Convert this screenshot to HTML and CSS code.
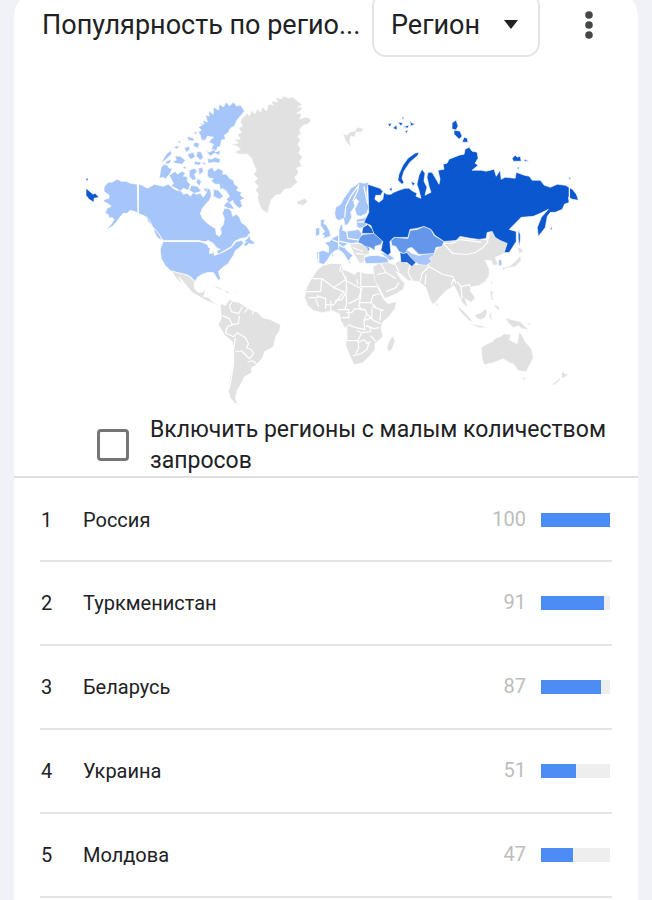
FILE: index.html
```html
<!doctype html>
<html lang="ru">
  <head>
    <meta charset="utf-8">
    <meta name="viewport" content="width=device-width, initial-scale=1">
    <title>Популярность по регионам</title>
    <link rel="stylesheet" href="styles.css">
  </head>
  <body>
    <main class="card">
      <header class="card-header">
        <h1>Популярность по регио...</h1>
        <div class="select">
          <select aria-label="Тип региона">
            <option>Регион</option>
          </select>
          <svg class="arrow" viewBox="0 0 14 9"><path d="M0 0h14L7 9z"/></svg>
        </div>
        <button class="menu" type="button" aria-label="Меню">
          <svg viewBox="0 0 8 28"><circle cx="4" cy="4" r="3.8"/><circle cx="4" cy="14" r="3.8"/><circle cx="4" cy="24" r="3.8"/></svg>
        </button>
      </header>

      <svg class="map" viewBox="80 86 504 320" role="img" aria-label="Карта мира">
        <!-- North America -->
        <g class="low">
          <path d="M104 187 108 182 112 182 117 179 121 181 126 181 130 183 137 184 138 213 134 211 130 210 127 213 123 213 119 218 116 222 112 226 106 229 111 224 114 219 112 217 109 218 108 214 105 213 107 208 111 206 109 204 103 201 105 199 109 198 109 195 104 191z"/>
          <path d="M138 184 142 185 147 188 151 186 154 184 158 185 163 186 168 184 173 188 176 190 180 190 183 194 187 193 190 196 193 192 196 194 200 193 203 197 206 192 207 187 210 190 211 195 209 200 206 203 202 208 200 213 202 218 206 222 210 225 215 228 216 234 219 236 221 233 220 228 223 224 224 218 222 213 224 208 228 208 231 211 232 216 236 214 239 217 241 222 246 226 250 232 246 237 240 238 234 241 231 246 224 250 218 254 216 249 211 247 207 242 198 240 163 240 159 234 154 228 149 222 145 216 138 213z"/>
          <path d="M163 241 198 241 207 243 208 247 212 247 214 255 222 252 231 247 236 241 242 240 243 243 239 247 235 250 233 255 230 259 228 263 222 267 218 271 220 278 218 280 215 275 213 272 207 272 201 274 197 277 195 281 190 276 186 274 177 272 170 270 165 265 161 258 160 249z"/>
          <path d="M242 241 246 239 249 235 250 239 254 242 253 244 248 243 246 246 243 244 246 241z"/>
          <path d="M205 115 209 116 208 111 213 114 213 107 218 110 219 104 223 107 226 102 229 106 233 102 236 106 240 105 242 108 244 111 241 115 238 118 236 121 234 126 230 128 228 132 224 135 225 139 221 140 220 146 217 147 216 151 211 149 213 144 208 142 213 137 207 136 205 140 201 140 200 135 198 132 201 130 198 127 202 125 199 123 204 124 202 120 207 122 206 118z"/>
          <path d="M205 150 209 152 214 149 215 152 220 150 219 155 214 153 210 156zM207 158 211 159 215 157 220 159 219 163 214 162 208 163zM197 151 201 152 203 157 200 160 196 156zM187 154 193 152 195 157 190 159zM194 161 201 162 199 165 194 164zM201 163 205 162 205 165zM187 136 193 138 194 141 188 140zM194 142 199 143 198 148 193 146zM177 142 180 140 180 143zM173 147 179 145 177 149zM166 154 171 150 171 154 166 159 161 163 163 159zM175 156 180 156 185 160 182 164 175 163 172 161 176 160zM166 161 171 159 170 163 165 164zM194 131 197 132 195 135zM184 148 188 146 190 149 186 152zM182 167 186 166 185 169z"/>
          <path d="M161 167 164 164 167 165 169 168 172 168 170 173 165 179 163 177 159 178z"/>
          <path d="M169 175 175 171 177 174 182 171 185 173 183 176 187 176 187 181 190 184 188 190 183 188 180 191 176 188 171 186 173 183z"/>
          <path d="M189 170 194 168 197 171 194 174 196 179 192 180 189 176zM198 168 202 167 203 171 199 175zM197 178 201 181 199 186 196 182zM191 185 197 186 201 191 194 193 189 190zM203 188 207 188 206 193zM213 189 218 190 223 196 219 199 213 196z"/>
          <path d="M207 170 212 167 214 171 218 168 223 171 222 174 226 174 229 178 233 180 234 184 238 187 236 190 241 192 240 195 244 198 240 200 242 206 239 208 234 204 232 200 229 203 226 199 229 196 226 191 222 188 220 190 219 184 215 184 211 181 213 178 209 178 207 175z"/>
          <path d="M223 206 227 201 231 204 234 209 228 208zM153 229 156 230 160 236 162 240 157 237zM146 216 149 219 152 225 148 221z"/>
        </g>
        <path class="lakes" d="M203 242 208 240 213 243 216 247 220 249 216 250 213 247 212 253 209 253 210 246z"/>
        <g class="none">
          <path d="M172 271 177 272 188 275 194 281 194 288 198 292 201 292 205 289 204 294 203 296 208 297 212 301 217 304 220 306 213 303 206 300 199 296 192 292 187 286 182 280 178 276 182 283 179 281 174 275z"/>
          <path d="M212 285 219 287 223 290 217 288zM224 290 228 291 230 293 225 292zM234 291 237 291 236 292z"/>
          <path d="M241 119 247 113 249 116 251 110 254 114 257 109 260 112 262 107 266 111 268 104 273 105 270 101 277 102 275 97 281 99 283 96 288 98 292 97 298 102 302 105 297 107 302 107 300 111 296 113 301 114 299 119 305 117 309 118 310 121 307 124 303 125 299 129 300 134 297 136 300 140 297 144 300 148 298 153 302 157 299 161 301 166 296 168 298 173 294 177 297 182 290 188 284 189 280 194 275 195 271 199 269 205 267 213 264 211 261 209 258 202 257 197 258 194 255 190 258 186 254 182 257 178 253 174 256 170 253 164 251 158 247 154 239 154 234 152 240 149 237 146 230 144 238 143 234 139 240 139 237 134 241 132 238 128 242 126 240 122z"/>
          <path d="M296 201 300 200 304 198 307 201 303 205 297 204z"/>
          <!-- South America -->
          <path d="M220 303 225 305 229 299 233 301 239 302 243 305 250 309 258 312 262 317 270 319 280 324 279 330 275 336 273 346 264 351 262 357 256 364 251 367 251 372 244 376 241 382 237 389 235 396 236 401 240 404 234 402 230 397 228 390 229 380 232 367 233 350 232 341 224 334 218 324 221 317z"/>
        </g>
        <path class="border" d="M232 301 229 305 231 311 238 313 242 306M222 315 229 318 232 324 227 326M232 324 238 323 239 315M227 326 225 332 233 336 237 332 245 337 248 343 246 347 251 349 253 353 249 358 245 354 241 350 235 351M235 337 233 350 233 364 231 376 229 388M248 307 244 312M253 309 252 314M247 361 252 360 257 364"/>

        <!-- Africa and Madagascar -->
        <g class="none">
          <path d="M317 269 322 265 330 263 341 263 342 269 348 271 354 274 357 271 365 273 373 273 375 280 378 290 383 299 387 303 396 301 394 308 388 316 382 321 380 327 382 336 374 343 374 349 368 356 362 362 353 364 350 357 345 345 346 330 340 320 339 313 331 310 322 312 313 310 307 305 304 297 306 287 311 278z"/>
          <path d="M392 335 394 340 391 349 388 351 386 347 388 341z"/>
          <!-- Asia -->
          <path d="M372 266 378 263 385 261 393 264 398 260 410 264 418 264 424 258 433 252 443 241 460 237 470 239 487 239 489 231 493 232 498 239 507 243 505 252 498 255 494 257 497 264 492 265 490 260 484 260 488 268 488 275 484 281 478 285 471 286 469 290 474 297 470 302 464 298 467 307 461 302 457 293 453 285 444 291 437 299 432 304 429 299 425 287 418 281 407 280 401 274 395 271 401 280 404 283 402 289 394 294 384 298 380 290 374 280z"/>
          <path d="M435 301 437 304 435 306zM456 306 460 308 466 314 472 321 468 320 461 313zM469 323 480 325 487 327 478 327zM474 314 480 312 484 308 486 311 484 317 479 319 475 317zM488 313 491 312 490 316 492 320 489 318zM489 290 492 291 491 297 494 300 490 299zM493 304 498 306 498 310 494 307zM489 282 491 281 491 285zM504 317 511 319 519 321 524 326 528 329 521 328 517 325 512 327 507 322zM526 323 530 322 528 325z"/>
          <path d="M516 247 521 248 522 251 518 253zM519 255 520 260 514 266 504 268 502 270 501 267 508 266 514 261z"/>
          <!-- Oceania -->
          <path d="M480 347 484 344 491 341 495 337 499 336 503 333 510 334 508 339 516 343 518 331 521 335 524 341 530 348 532 357 528 365 525 371 517 370 512 363 508 362 502 358 492 362 483 364 481 358z"/>
          <path d="M521 377 525 377 523 380zM561 369 563 373 567 373 563 377 560 377zM560 376 558 380 553 384 550 384 555 380z"/>
          <path d="M342 133 346 135 349 132 354 131 357 127 363 129 360 132 355 132 354 137 350 136 349 141 351 147 346 143 343 136z"/>
        </g>
        <path class="border" d="M312 278 321 278 320 291 306 291M321 278 333 287 343 291 337 299 333 304 325 304 325 298 316 295M333 287 345 279 341 270M345 276 346 290 341 299 334 300M341 262 339 271M345 280 360 288 360 296 358 305 361 310M360 270 360 286 376 286M345 290 346 303 344 309 337 309M361 287 358 298 348 303M358 302 370 302 375 306M370 302 372 295 378 293M371 306 383 310M345 312 351 312 354 308 364 309 366 313 363 320 364 329 355 327 347 324M346 325 346 340 357 340 361 332 356 330M366 313 373 320 380 323M365 325 373 328 378 327M361 332 370 331 369 326M347 340 357 340 358 347 355 353M357 342 363 339 368 343 366 349 360 353 352 355M370 335 375 341M371 308 371 317 363 320M380 309 379 320M325 298 325 308M330 300 330 310M315 299 318 306M308 297 318 297M356 278 357 284M365 343 370 341M340 309 348 309 348 317 341 317"/>
        <path class="border" d="M442 243 452 253 466 254 474 252 482 247 487 241 483 237M442 243 451 243 458 239 480 242M424 258 428 266 421 273 419 281M410 262 407 272 412 281M428 266 442 274 452 276 455 283M425 274 424 284M380 263 385 272 395 278M385 272 376 274M394 263 398 271M456 281 460 286 468 284 471 289M385 291 395 287 398 282M460 286 461 298M453 277 450 285"/>

        <!-- Europe -->
        <g class="low">
          <path d="M334 213 335 207 340 204 343 198 347 193 350 188 355 185 359 182 363 183 368 182 367 187 366 192 368 207 366 213 360 216 356 215 354 209 358 201 355 198 353 202 354 206 350 212 351 217 347 224 344 225 343 218 338 220 335 218z"/>
          <path d="M320 219 324 219 323 223 326 225 329 231 330 236 322 238 324 235 321 234 324 231 322 228 320 225zM315 228 319 227 319 234 315 236z"/>
          <path d="M324 242 329 241 331 238 337 235 338 230 340 224 342 225 342 230 345 231 358 229 361 233 360 240 357 242 352 243 347 243 343 246 346 250 352 255 350 257 348 261 346 258 343 253 338 249 333 251 330 254 327 259 323 264 317 262 316 252 322 250 328 252 328 246z"/>
          <path d="M356 219 366 217 366 223 364 226 359 228 356 226zM363 257 370 255 377 255 386 257 388 262 376 263 365 263zM379 252 388 254 394 258 389 260 384 256zM331 253 333 253 332 258zM347 261 350 261 349 263zM402 248 406 249 411 253 418 255 431 252 434 254 428 258 431 261 425 265 418 264 412 260 406 254z"/>
          <path d="M497 260 500 259 501 264 498 266z"/>
        </g>
        <path class="none" d="M349 244 357 243 365 245 369 252 364 255 363 262 359 263 354 255z"/>
        <path class="border" d="M358 184 357 190 352 201M344 217 345 206 350 196 357 186M338 231 338 244 343 247M346 231 347 238 360 240M331 239 338 242 338 248M339 241 349 243M363 186 367 204M318 252 318 262M357 222 366 221M352 247 362 251M355 253 364 254"/>
        <path class="mid" d="M359 237 362 234 373 233 382 240 380 244 374 246 374 250 369 247 366 248 362 244 357 242zM364 246 369 247 368 251z"/>
        <path class="mid" d="M390 240 394 237 407 238 409 230 416 229 423 226 430 229 433 235 443 241 441 246 435 247 433 253 418 254 411 247 407 248 404 254 398 251 395 246 391 245z"/>
        <path class="high" d="M361 233 362 227 367 224 372 229 373 233zM399 252 403 253 406 252 409 256 415 262 411 266 406 262 400 262z"/>

        <!-- Russia -->
        <g class="top">
          <path d="M367 184 373 186 379 188 382 191 380 195 375 195 374 199 378 202 382 199 383 192 386 194 390 194 393 192 398 190 404 188 408 188 412 191 416 193 415 196 420 198 418 190 416 184 418 175 421 169 424 173 423 181 426 187 424 195 430 192 428 186 426 177 427 172 431 172 434 177 438 184 439 179 437 170 443 169 442 164 446 163 448 159 453 157 458 155 463 154 464 149 468 147 471 151 476 152 477 158 474 163 477 165 471 170 480 170 485 171 493 169 495 176 499 170 500 179 504 177 514 178 515 172 523 175 528 176 531 180 539 180 543 185 549 187 556 184 564 185 571 189 575 194 577 200 571 199 567 197 568 202 563 204 561 209 554 212 549 212 546 216 544 227 537 236 536 227 540 217 547 209 539 213 532 216 520 217 508 229 515 231 515 241 508 252 503 252 506 243 499 240 494 237 491 231 486 232 485 238 478 239 470 238 459 236 455 240 443 241 434 235 430 229 423 226 416 228 409 229 407 237 393 237 389 241 390 252 387 255 380 250 382 241 373 233 370 225 363 222 368 212z"/>
          <path d="M418 152 414 153 407 158 402 165 398 174 397 180 401 184 403 182 401 178 403 171 409 162 417 155z"/>
          <path d="M451 123 455 120 457 126 455 130 451 129zM453 130 459 131 461 136 458 139 453 134zM463 137 466 138 467 142 461 142zM511 158 514 155 516 157 519 156 520 161 512 161zM523 159 528 161 523 161zM516 167 518 167 517 170zM567 177 570 178 568 179z"/>
          <path d="M517 229 519 234 519 240 518 246 517 238zM549 228 551 226 550 230zM387 124 391 123 389 127zM392 128 396 125 396 130zM397 122 402 123 400 126zM402 127 408 125 407 128zM409 121 411 123 414 124 410 126zM388 189 391 187 391 191zM401 117 403 117 402 120zM404 131 407 130 406 133zM410 181 414 183 412 186z"/>
          <path d="M86 188 93 194 95 193 99 197 94 198 94 202 89 199 86 195zM86 178 88 178 88 180 86 180z"/>
        </g>
        <path class="border" d="M568 186V202M138 184V213M164 241H200"/>
      </svg>

      <label class="filter">
        <input type="checkbox">
        <span>Включить регионы с малым количеством запросов</span>
      </label>

      <table class="regions">
        <tr>
          <td class="rank">1</td><td class="name">Россия</td><td class="value">100</td>
          <td class="chart"><div class="bar"><div style="width: 100%"></div></div></td>
        </tr>
        <tr>
          <td class="rank">2</td><td class="name">Туркменистан</td><td class="value">91</td>
          <td class="chart"><div class="bar"><div style="width: 91%"></div></div></td>
        </tr>
        <tr>
          <td class="rank">3</td><td class="name">Беларусь</td><td class="value">87</td>
          <td class="chart"><div class="bar"><div style="width: 87%"></div></div></td>
        </tr>
        <tr>
          <td class="rank">4</td><td class="name">Украина</td><td class="value">51</td>
          <td class="chart"><div class="bar"><div style="width: 51%"></div></div></td>
        </tr>
        <tr>
          <td class="rank">5</td><td class="name">Молдова</td><td class="value">47</td>
          <td class="chart"><div class="bar"><div style="width: 47%"></div></div></td>
        </tr>
      </table>
    </main>
  </body>
</html>
```
FILE: styles.css
```css
* {
  box-sizing: border-box;
  margin: 0;
  padding: 0;
}

body {
  display: flex;
  flex-direction: column;
  min-height: 100vh;
  padding: 0 14px;
  background: #f0f2f8;
  color: #202124;
  font-family: Roboto, "Open Sans", sans-serif;
}

.card {
  flex: 1;
  margin-top: -8px;
  background: white;
  border-radius: 24px 24px 0 0;
}

.card-header {
  display: flex;
  align-items: center;
  padding: 0 34px 0 28px;
}

h1 {
  flex: 1;
  overflow: hidden;
  white-space: nowrap;
  font-size: 27px;
  font-weight: 400;
  line-height: 40px;
}

.select {
  position: relative;
  width: 168px;
}

select {
  -webkit-appearance: none;
  appearance: none;
  display: block;
  width: 100%;
  height: 65px;
  padding-left: 17px;
  border: 2px solid #e4e5e7;
  border-radius: 14px;
  background: white;
  color: #202124;
  font-family: inherit;
  font-size: 27px;
}

.arrow {
  position: absolute;
  top: 28px;
  right: 22px;
  width: 14px;
  height: 9px;
  fill: #202124;
  pointer-events: none;
}

.menu {
  width: 30px;
  height: 40px;
  margin-left: 34px;
  border: none;
  background: none;
}

.menu svg {
  display: block;
  width: 8px;
  height: 28px;
  margin: 0 auto;
  fill: #444746;
}

/* map */
.map {
  display: block;
  width: 81%;
  margin: 29px auto 0 66px;
}

.map path {
  stroke: white;
  stroke-width: .6;
  stroke-linejoin: round;
}

.none, .map .none {
  fill: #e1e1e1;
}

.low {
  fill: #a6c5f9;
}

.mid {
  fill: #6496e9;
}

.high {
  fill: #1f63d3;
}

.top {
  fill: #0b57d0;
}

.lakes {
  fill: white;
}

.map .border {
  fill: none;
  stroke-width: 1.2;
}

.filter {
  display: flex;
  align-items: center;
  gap: 21px;
  padding: 7px 20px 0 83px;
  border-bottom: 2px solid #dfe0e2;
  font-size: 23px;
  line-height: 31px;
}

.filter input {
  -webkit-appearance: none;
  appearance: none;
  flex: none;
  width: 32px;
  height: 32px;
  border: 3px solid #757575;
  border-radius: 4px;
}

/* list */
.regions {
  width: calc(100% - 52px);
  height: 418px;
  margin: 2px 26px 0;
  border-collapse: collapse;
  font-size: 20px;
}

.regions td {
  border-bottom: 2px solid #e3e4e6;
}

.regions .rank {
  width: 43px;
  padding-left: 1px;
}

.regions .value {
  width: 60px;
  padding-bottom: 2px;
  color: #bdbdbd;
  text-align: right;
}

.regions .chart {
  width: 86px;
  padding: 0 2px 0 15px;
}

.bar {
  height: 14px;
  background: #eeeeee;
}

.bar div {
  height: 100%;
  background: #4c8df5;
}
```
